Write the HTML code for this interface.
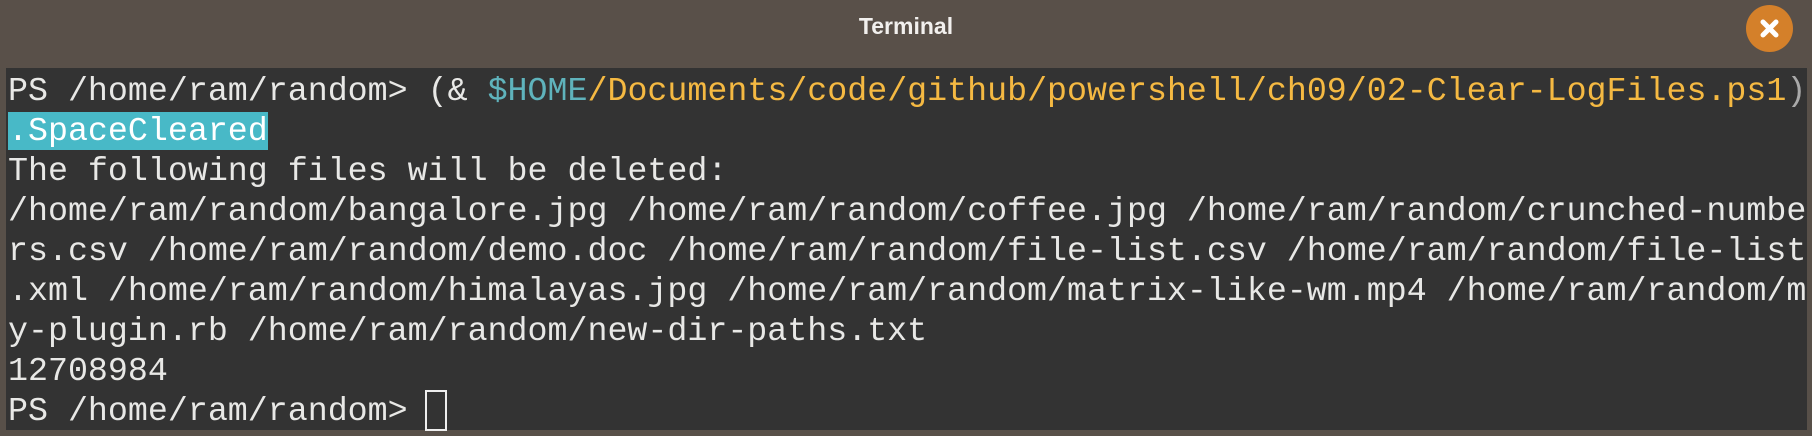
<!DOCTYPE html>
<html><head><meta charset="utf-8"><style>
html,body{margin:0;padding:0;width:1812px;height:436px;overflow:hidden;background:#585049;}
.title{position:absolute;left:0;top:0;width:1812px;height:68px;background:#595049;}
.title span{position:absolute;left:0;width:1812px;top:13px;text-align:center;color:#f2f0ee;font:bold 23px "Liberation Sans",sans-serif;}
.close{position:absolute;left:1746px;top:5px;width:47px;height:47px;border-radius:50%;background:#d4802a;}
.term{position:absolute;left:6px;top:68px;width:1801px;height:362px;background:#333333;}
pre{margin:0;position:absolute;left:2px;top:3px;font:33.3px/40px "Liberation Mono",monospace;color:#e8e8e6;white-space:pre;}
.c{color:#5fb3bc}.y{color:#f5b942}.g{color:#aaa}
.hl{background:#48b9c7;color:#fff;}
.cur{position:absolute;left:419px;top:322px;width:18px;height:37px;border:2px solid #eee;}
</style></head><body>
<div class="title"><span>Terminal</span>
<div class="close"><svg width="47" height="47" viewBox="0 0 47 47"><path d="M17 17L30 30M30 17L17 30" stroke="#fff" stroke-width="5" stroke-linecap="round"/></svg></div></div>
<div class="term"><pre>PS /home/ram/random&gt; (&amp; <span class="c">$HOME</span><span class="y">/Documents/code/github/powershell/ch09/02-Clear-LogFiles.ps1</span><span class="g">)</span>
<span class="hl">.SpaceCleared</span>
The following files will be deleted:
/home/ram/random/bangalore.jpg /home/ram/random/coffee.jpg /home/ram/random/crunched-numbe
rs.csv /home/ram/random/demo.doc /home/ram/random/file-list.csv /home/ram/random/file-list
.xml /home/ram/random/himalayas.jpg /home/ram/random/matrix-like-wm.mp4 /home/ram/random/m
y-plugin.rb /home/ram/random/new-dir-paths.txt
12708984
PS /home/ram/random&gt; </pre><div class="cur"></div></div>
</body></html>
